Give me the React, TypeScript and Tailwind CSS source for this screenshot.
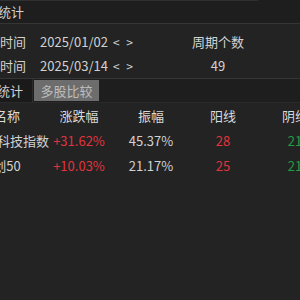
export default function App () {
	const rows = [
		{ name: '科创科技指数', change: '+31.62%', amp: '45.37%', up: '28', down: '21' },
		{ name: '创50', change: '+10.03%', amp: '21.17%', up: '25', down: '21' },
	]

	return (
		<div
			className="w-[300px] h-[300px] overflow-hidden bg-[#232323] text-[13px] text-[#d2d2d2]"
			style={{ fontFamily: '"Noto Sans CJK SC", "Noto Sans", sans-serif' }}
		>
			{/* section title */}
			<div className="h-[23px] bg-[#1e1e1e] flex items-center relative">
				<div className="absolute top-0 left-0 w-[258px] h-px bg-[#303030]" />
				<span className="ml-[-28px] whitespace-nowrap">{'区间统计'}</span>
			</div>
			<div className="h-px bg-[#353535]" />

			{/* date range */}
			<div className="h-[54px] pt-[6px]">
				<div className="h-6 flex items-center">
					<span className="ml-[-26px] w-[66px] whitespace-nowrap">{'开始时间'}</span>
					<span className="whitespace-nowrap">{'2025/01/02'}</span>
					<span className="ml-[5px] text-[12px] tracking-[2px]">{'< >'}</span>
					<span className="ml-auto w-[140px] text-center pr-[24px]">{'周期个数'}</span>
				</div>
				<div className="h-6 flex items-center">
					<span className="ml-[-26px] w-[66px] whitespace-nowrap">{'结束时间'}</span>
					<span className="whitespace-nowrap">{'2025/03/14'}</span>
					<span className="ml-[5px] text-[12px] tracking-[2px]">{'< >'}</span>
					<span className="ml-auto w-[140px] text-center pr-[24px]">{'49'}</span>
				</div>
			</div>
			<div className="h-px bg-[#353535]" />

			{/* tabs */}
			<div className="h-[24px] bg-[#1e1e1e] flex items-stretch border-b border-[#2a2a2a]">
				<div className="w-[33px] bg-[#1a1a1a] border-r border-[#2c2c2c] flex items-center justify-end pr-[9px]">
					<span className="whitespace-nowrap">{'区间统计'}</span>
				</div>
				<div className="ml-px w-[65px] my-px bg-[#6d6d6d] text-[#bdbdbd] flex items-center justify-center">
					{'多股比较'}
				</div>
			</div>

			{/* table */}
			<div className="ml-[-29px] w-[360px]">
				<div className="grid grid-cols-5 h-[25px] items-center text-center text-[#dadada]">
					<span>{'名称'}</span>
					<span>{'涨跌幅'}</span>
					<span>{'振幅'}</span>
					<span>{'阳线'}</span>
					<span>{'阴线'}</span>
				</div>
				{rows.map(r => (
					<div key={r.name} className="grid grid-cols-5 h-[25px] items-center text-center">
						<span className="whitespace-nowrap">{r.name}</span>
						<span className="text-[#e0343d]">{r.change}</span>
						<span>{r.amp}</span>
						<span className="text-[#e0343d]">{r.up}</span>
						<span className="text-[#1e9e44]">{r.down}</span>
					</div>
				))}
			</div>
		</div>
	)
}
